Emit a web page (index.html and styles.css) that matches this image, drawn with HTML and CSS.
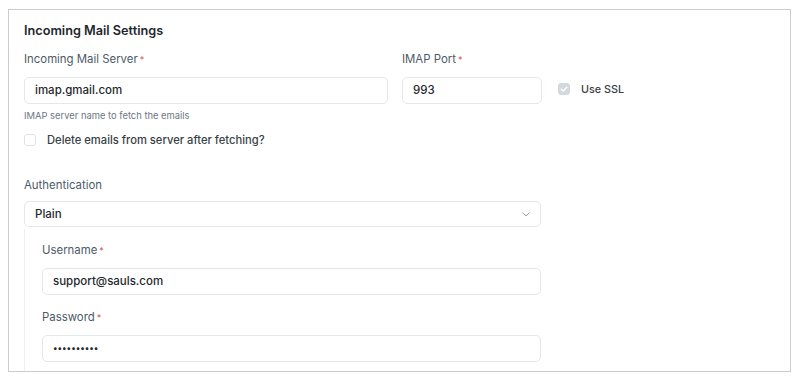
FILE: index.html
```html
<!DOCTYPE html>
<html>
<head>
<meta charset="utf-8">
<link rel="stylesheet" href="styles.css">
</head>
<body>
<div class="frame">
  <div class="section-title">Incoming Mail Settings</div>
  <div class="row">
    <div class="col col-server">
      <div class="label">Incoming Mail Server<span class="req">*</span></div>
      <div class="input">imap.gmail.com</div>
      <div class="help">IMAP server name to fetch the emails</div>
      <div class="check-row">
        <span class="checkbox"></span>
        <span class="check-label">Delete emails from server after fetching?</span>
      </div>
    </div>
    <div class="col col-port">
      <div class="label">IMAP Port<span class="req">*</span></div>
      <div class="input">993</div>
    </div>
    <div class="col col-ssl">
      <div class="check-row ssl">
        <span class="checkbox checked">
          <svg viewBox="0 0 12 12" width="12" height="12"><path d="M3.2 6.2 L5.2 8 L8.8 4.2" fill="none" stroke="#fff" stroke-width="1.4" stroke-linecap="round" stroke-linejoin="round"/></svg>
        </span>
        <span class="check-label">Use SSL</span>
      </div>
    </div>
  </div>
  <div class="auth">
    <div class="label auth-label">Authentication</div>
    <div class="input select">Plain
      <svg class="chev" viewBox="0 0 10 6" width="8" height="5"><path d="M1 1 L5 4.8 L9 1" fill="none" stroke="#8d99a6" stroke-width="1.2" stroke-linecap="round" stroke-linejoin="round"/></svg>
    </div>
    <div class="group">
      <div class="label">Username<span class="req">*</span></div>
      <div class="input">support@sauls.com</div>
      <div class="label pw-label">Password<span class="req">*</span></div>
      <div class="input pw">••••••••••</div>
    </div>
  </div>
</div>
</body>
</html>
```

FILE: styles.css
```css
* { box-sizing: border-box; }
html, body { background: #fff; }
body {
  margin: 0;
  padding: 9px 0 0 8px;
  font-family: Inter, "Noto Sans", "Liberation Sans", sans-serif;
  color: #1f272e;
}
.frame {
  width: 783px;
  height: 363px;
  border: 1px solid #cccccc;
  padding: 11px 0 0 15px;
  overflow: hidden;
}
.section-title {
  font-size: 12.7px;
  font-weight: 600;
  line-height: 20px;
  color: #1f272e;
}
.row {
  display: flex;
  margin-top: 10px;
}
.col-server { width: 364px; }
.col-port { width: 140px; margin-left: 14px; }
.col-ssl { margin-left: 16px; padding-top: 31px; }
.label {
  font-size: 11.4px;
  line-height: 16px;
  color: #4c5a67;
  margin-bottom: 9px;
}
.req {
  color: #e24c4c;
  font-size: 9px;
  margin-left: 2px;
}
.input {
  height: 27px;
  border: 1px solid #e4e8eb;
  border-radius: 5px;
  padding: 0 10px;
  font-size: 11.5px;
  font-weight: 500;
  line-height: 25px;
  color: #1f272e;
  background: #fff;
}
.help {
  font-size: 9.4px;
  line-height: 14px;
  color: #6b7785;
  margin-top: 5px;
}
.check-row {
  display: flex;
  align-items: center;
  margin-top: 10px;
  height: 14px;
}
.checkbox {
  width: 12px;
  height: 12px;
  border: 1px solid #dfe3e7;
  border-radius: 3px;
  background: #fff;
  display: inline-flex;
}
.checkbox.checked {
  background: #d3d9de;
  border-color: #d3d9de;
}
.checkbox.checked svg { margin: -1px; }
.check-label {
  margin-left: 11px;
  font-size: 11.2px;
  font-weight: 500;
  color: #383f45;
}
.ssl { margin-top: 0; }
.ssl .check-label { font-size: 10.8px; }
.auth { margin-top: 30px; }
.auth-label { margin-bottom: 8px; }
.select {
  width: 517px;
  height: 26px;
  display: flex;
  align-items: center;
  justify-content: space-between;
  line-height: 24px;
}
.chev { margin-right: 0; }
.group {
  margin-top: 2px;
  border-left: 1px solid #eceff1;
  padding: 13px 0 0 17px;
  width: 517px;
  height: 160px;
}
.group .input { width: 499px; }
.group .label { margin-bottom: 9px; }
.pw-label { margin-top: 14px; }
.pw { font-size: 8.5px; }
```
